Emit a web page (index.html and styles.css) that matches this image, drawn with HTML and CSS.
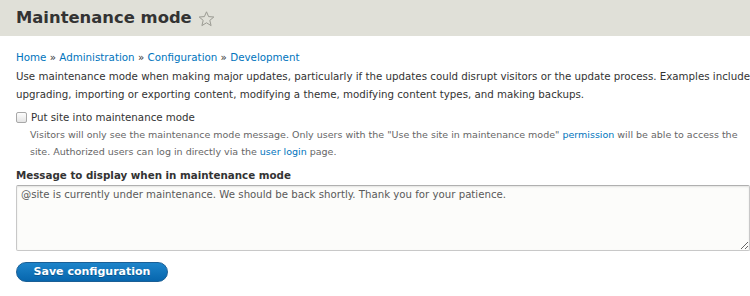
FILE: index.html
```html
<!DOCTYPE html>
<html>
<head>
<meta charset="utf-8">
<link rel="stylesheet" href="styles.css">
</head>
<body>
<header class="page-header">
  <h1 class="page-title">Maintenance mode <span class="star"><svg width="17" height="16" viewBox="0 0 17 16"><path d="M8.5 0.8 L10.6 5.6 L15.8 6 L11.8 9.4 L13.1 14.6 L8.5 11.8 L3.9 14.6 L5.2 9.4 L1.2 6 L6.4 5.6 Z" fill="none" stroke="#9a9a92" stroke-width="1" stroke-linejoin="round"/></svg></span></h1>
</header>
<main class="content">
  <nav class="breadcrumb"><a href="#">Home</a> » <a href="#">Administration</a> » <a href="#">Configuration</a> » <a href="#">Development</a></nav>
  <p class="intro">Use maintenance mode when making major updates, particularly if the updates could disrupt visitors or the update process. Examples include upgrading, importing or exporting content, modifying a theme, modifying content types, and making backups.</p>
  <div class="checkbox-item">
    <label class="check-label"><input type="checkbox" class="check"> Put site into maintenance mode</label>
    <div class="description">Visitors will only see the maintenance mode message. Only users with the "Use the site in maintenance mode" <a href="#">permission</a> will be able to access the site. Authorized users can log in directly via the <a href="#">user login</a> page.</div>
  </div>
  <div class="text-item">
    <label class="field-label">Message to display when in maintenance mode</label>
    <textarea class="message">@site is currently under maintenance. We should be back shortly. Thank you for your patience.</textarea>
  </div>
  <button class="save">Save configuration</button>
</main>
</body>
</html>
```
FILE: styles.css
```css
* { box-sizing: border-box; }
html, body { margin: 0; padding: 0; }
body {
  font-family: "DejaVu Sans", sans-serif;
  font-size: 10.25px;
  color: #333;
  background: #fff;
  width: 750px;
  height: 296px;
  overflow: hidden;
}
a { color: #0074bd; text-decoration: none; }
.page-header {
  background: #e0e0d8;
  height: 36px;
  padding: 0 16px;
}
.page-title {
  margin: 0;
  font-size: 16.4px;
  line-height: 38px;
  height: 36px;
  font-weight: bold;
  color: #333;
  white-space: nowrap;
  display: flex;
  align-items: center;
  gap: 6px;
}
.star { display: inline-flex; margin-top: 1px; }
.content { padding: 12px 0 0 16px; width: 750px; }
.breadcrumb { font-size: 10.3px; line-height: 18px; }
.intro { margin: 1px 0 0; line-height: 18px; width: 736px; }
.checkbox-item { margin-top: 5px; }
.check-label { display: flex; align-items: center; gap: 4px; line-height: 18px; }
.check {
  appearance: none;
  -webkit-appearance: none;
  margin: 0;
  width: 11px;
  height: 11px;
  border: 1px solid #a8a8a8;
  border-radius: 2px;
  background: linear-gradient(#fdfdfd, #e4e4e4);
}
.description { font-size: 9.5px; color: #666; line-height: 17px; padding-left: 14px; margin-top: 0; }
.text-item { margin-top: 7px; }
.field-label { display: block; font-weight: bold; font-size: 10.3px; line-height: 16px; margin-bottom: 2px; }
.message {
  display: block;
  width: 734px;
  height: 66px;
  font-family: "DejaVu Sans", sans-serif;
  font-size: 10.2px;
  line-height: 14px;
  color: #595959;
  background: #fcfcfa;
  border: 1px solid #c8c8c8;
  border-top-color: #b0b0b0;
  border-radius: 2px;
  padding: 2px 4px;
  resize: vertical;
  box-shadow: inset 0 1px 2px rgba(0,0,0,0.1);
  margin: 0;
}
.save {
  display: block;
  margin-top: 11px;
  font-family: "DejaVu Sans", sans-serif;
  font-weight: bold;
  font-size: 11px;
  color: #fff;
  background: linear-gradient(#1d84ca, #0766ad);
  border: 1px solid #1a5f96;
  border-radius: 20px;
  height: 20px;
  width: 152px;
  padding: 0 0 1px;
  text-shadow: 0 1px 0 rgba(0,0,0,0.25);
}
```
